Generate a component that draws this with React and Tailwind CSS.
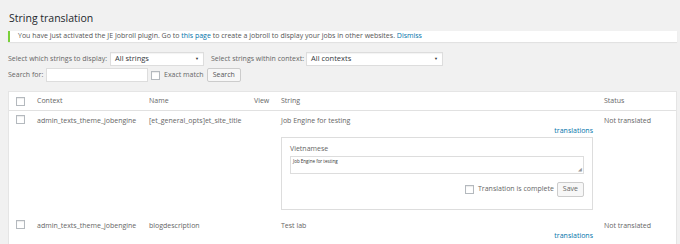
import React from "react"

const Check = ({ className = "" }) => (
  <span className={`inline-block shrink-0 w-[9px] h-[9px] border border-[#b4b9be] bg-white shadow-[inset_0_1px_1px_rgba(0,0,0,0.08)] ${className}`} />
)

const Select = ({ label, width }) => (
  <div className={`flex items-center justify-between h-[14px] bg-white border border-[#ddd] pl-[4px] pr-[4px] shadow-[inset_0_1px_1px_rgba(0,0,0,0.05)] ${width}`}>
    <span className="text-[7.5px] text-[#32373c]">{label}</span>
    <span className="text-[4px] text-[#333]">▼</span>
  </div>
)

export default function App() {
  return (
    <div
      className="h-[244px] overflow-hidden bg-[#f1f1f1] pl-[8px] pr-[3px] text-[7px] text-[#666] whitespace-nowrap"
      style={{ fontFamily: '"Open Sans", sans-serif' }}
    >
      <h1 className="pt-[9px] pl-[1px] h-[28px] text-[10.5px] leading-[18px] font-normal text-[#23282d]">String translation</h1>

      {/* Notice */}
      <div className="mt-[3px] h-[11px] bg-white border-l-[2px] border-[#7ad03a] pl-[8px] flex items-center shadow-[0_1px_1px_rgba(0,0,0,0.06)]">
        <span className="text-[#555]">
          You have just activated the JE Jobroll plugin. Go to <span className="text-[#0073aa]">this page</span> to create a jobroll to display your jobs in other websites.{" "}
          <span className="text-[#0073aa]">Dismiss</span>
        </span>
      </div>

      {/* Filters */}
      <div className="mt-[10px] flex items-center h-[14px]">
        <span className="w-[102px]">Select which strings to display:</span>
        <Select label="All strings" width="w-[94px]" />
        <span className="ml-[7px] w-[95px]">Select strings within context:</span>
        <Select label="All contexts" width="w-[137px]" />
      </div>
      <div className="mt-[2px] flex items-center h-[14px]">
        <span className="w-[38px]">Search for:</span>
        <span className="w-[102px] h-[14px] bg-white border border-[#ddd]" />
        <Check className="ml-[3px]" />
        <span className="ml-[4px]">Exact match</span>
        <span className="ml-[3px] h-[14px] px-[5px] flex items-center bg-[#f7f7f7] border border-[#ccc] rounded-[2px] text-[#555]">Search</span>
      </div>

      {/* Table */}
      <div className="mt-[9px] bg-white border border-[#e5e5e5]">
        <div className="flex items-center h-[19px] border-b border-[#e1e1e1]">
          <div className="w-[28px] pl-[7px] flex"><Check /></div>
          <div className="w-[112px]">Context</div>
          <div className="w-[105px]">Name</div>
          <div className="w-[27px]">View</div>
          <div className="w-[323px]">String</div>
          <div>Status</div>
        </div>

        <div className="flex pt-[4px]">
          <div className="w-[28px] pl-[7px] flex items-start"><Check /></div>
          <div className="w-[112px] leading-[11px]">admin_texts_theme_jobengine</div>
          <div className="w-[105px] leading-[11px]">[et_general_opts]et_site_title</div>
          <div className="w-[27px]" />
          <div className="w-[323px] pr-[11px]">
            <div className="leading-[11px]">Job Engine for testing</div>
            <div className="text-right text-[#0073aa] leading-[9px]">translations</div>
            <div className="mt-[2px] border border-[#ddd] pl-[8px] pr-[8px] pt-[6px] pb-[12px]">
              <div className="leading-[10px]">Vietnamese</div>
              <div className="mt-[2px] h-[18px] bg-white border border-[#ddd] pl-[2px] pt-[1px] text-[4.5px] leading-[7px] text-[#333] relative">
                Job Engine for testing
                <span className="absolute right-[1px] bottom-[0px] text-[5px] text-[#999]">◢</span>
              </div>
              <div className="mt-[8px] flex items-center justify-end">
                <Check />
                <span className="ml-[4px]">Translation is complete</span>
                <span className="ml-[3px] h-[15px] px-[5px] flex items-center bg-[#f7f7f7] border border-[#ccc] rounded-[2px]">Save</span>
              </div>
            </div>
          </div>
          <div className="leading-[11px]">Not translated</div>
        </div>

        <div className="flex pt-[10px] h-[40px]">
          <div className="w-[28px] pl-[7px] flex items-start"><Check /></div>
          <div className="w-[112px] leading-[11px]">admin_texts_theme_jobengine</div>
          <div className="w-[105px] leading-[11px]">blogdescription</div>
          <div className="w-[27px]" />
          <div className="w-[323px] pr-[11px]">
            <div className="leading-[11px]">Test lab</div>
            <div className="text-right text-[#0073aa] leading-[9px]">translations</div>
          </div>
          <div className="leading-[11px]">Not translated</div>
        </div>
      </div>
    </div>
  )
}
